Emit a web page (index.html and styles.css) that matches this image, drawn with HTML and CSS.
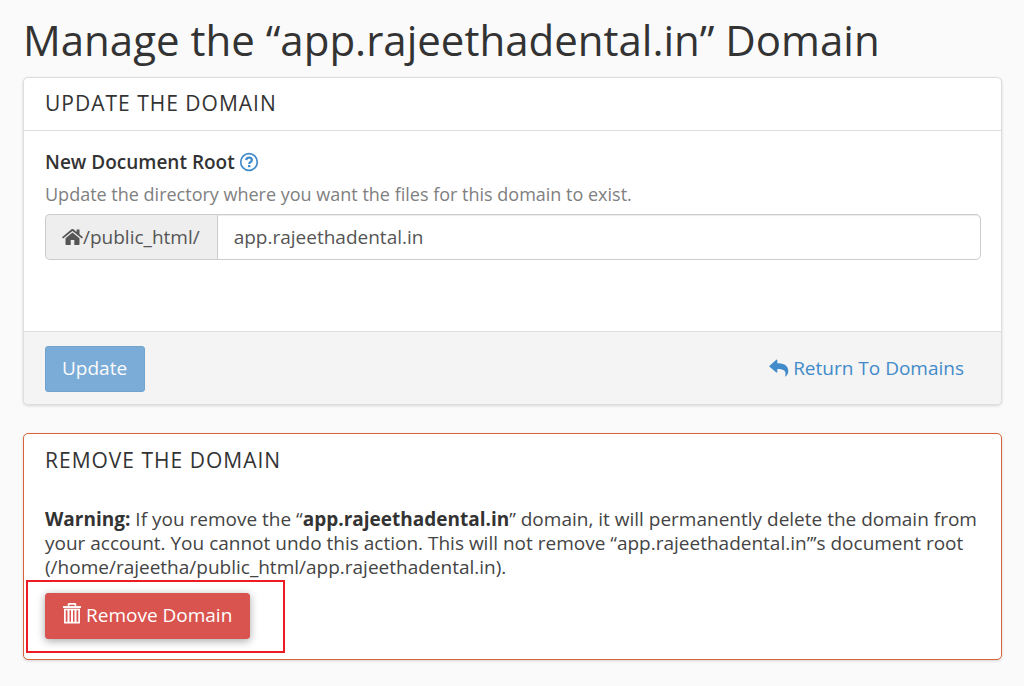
FILE: index.html
```html
<!DOCTYPE html>
<html lang="en">
<head>
  <meta charset="UTF-8">
  <meta name="viewport" content="width=device-width, initial-scale=1">
  <title>Manage the Domain</title>
  <link rel="stylesheet" href="styles.css">
</head>
<body>
  <main class="content">
    <h1 class="page-header">Manage the “app.rajeethadental.in” Domain</h1>

    <form class="panel">
      <h2 class="panel-heading">Update the Domain</h2>
      <div class="panel-body">
        <div class="label-row">
          <label for="doc-root">New Document Root</label>
          <button type="button" class="help-btn" aria-label="Help">
            <svg viewBox="0 0 20 20" width="20" height="20" fill="none" stroke="currentColor">
              <circle cx="10" cy="10" r="8.300" stroke-width="1.700"/>
              <path d="M7.200 8.100C7.300 6.400 8.500 5.600 10 5.600c1.700 0 2.900 1 2.900 2.400 0 2-2.700 2-2.700 4" stroke-width="2.200"/>
              <path d="M10.200 13v2.200" stroke-width="2.400"/>
            </svg>
          </button>
        </div>
        <p class="help-text">Update the directory where you want the files for this domain to exist.</p>
        <div class="input-group">
          <span class="input-addon">
            <svg viewBox="0 0 21 18" width="21" height="18" fill="currentColor">
              <path d="M10.500 4.400 3.500 10.200V16.200q0 .8.800.8H8.700V12h3.600v5h4.400q.8 0 .8-.8V10.200z"/>
              <path d="M0 9.200 9.500 1.300q1-.8 2 0L14.600 3.900V1.400h2.900v4.900L21 9.200 19.900 10.500 10.500 2.900 1.100 10.500z"/>
            </svg>/public_html/
          </span>
          <input type="text" id="doc-root" class="form-control" value="app.rajeethadental.in">
        </div>
      </div>
      <div class="panel-footer">
        <button type="submit" class="btn btn-primary" disabled>Update</button>
        <a href="#" class="return-link">
          <svg viewBox="0 0 20 18" width="20" height="18" fill="currentColor">
            <path d="M.3 7 7.300.8Q8.300.2 8.300 1.400V4.200C15 4.200 19.300 6.500 19.300 12c0 2.200-1 4-2.400 5.300-.5.400-.9.200-.7-.4C17.500 12.500 15.500 10 8.300 10v2.900q0 1.100-1 .5L.3 7.600q-.3-.3 0-.6z"/>
          </svg>
          Return To Domains
        </a>
      </div>
    </form>

    <section class="panel panel-danger">
      <h2 class="panel-heading">Remove the Domain</h2>
      <div class="panel-body">
        <p class="warning"><strong>Warning:</strong> If you remove the “<strong>app.rajeethadental.in</strong>” domain, it will permanently delete the domain from your account. You cannot undo this action. This will not remove “app.rajeethadental.in”’s document root (/home/rajeetha/public_html/app.rajeethadental.in).</p>
        <div class="highlight">
          <button type="button" class="btn btn-danger">
            <svg viewBox="0 0 18 25" width="18" height="25" fill="none" stroke="currentColor">
              <path d="M5.500 3.600V1.500Q5.500.9 6.100.9H11.900Q12.500.9 12.500 1.500V3.600" stroke-width="1.600"/>
              <path d="M0 4.100H18" stroke-width="2"/>
              <path d="M1.900 6.500H16.100V19.700H1.900z" stroke-width="1.700"/>
              <path d="M5.500 7v12M9 7v12M12.500 7v12" stroke-width="2"/>
            </svg>
            Remove Domain
          </button>
        </div>
      </div>
    </section>
  </main>
</body>
</html>
```
FILE: styles.css
```css
* {
  box-sizing: border-box;
}
body {
  margin: 0;
  background-color: #fafafa;
  color: #333;
  font-family: "Open Sans", Arial, sans-serif;
  font-size: 18px;
  line-height: 24px;
}
h1, h2, p {
  margin: 0;
}
svg {
  flex: none;
}
.content {
  padding: 15px 22px 24px 23px;
}
.page-header {
  margin-bottom: 12px;
  font-size: 42px;
  font-weight: 400;
  line-height: 50px;
}
.panel {
  margin-bottom: 28px;
  background-color: #fff;
  border: 1px solid #ddd;
  border-radius: 5px;
  box-shadow: 0 1px 3px rgba(0, 0, 0, 0.15);
}
.panel-heading {
  padding: 13px 21px 15px;
  border-bottom: 1px solid #ddd;
  font-size: 21px;
  font-weight: 400;
  line-height: 24px;
  letter-spacing: 1px;
  text-transform: uppercase;
}
.panel-body {
  padding: 19px 20px 71px 21px;
}
.label-row {
  display: flex;
  align-items: center;
  gap: 4px;
  font-size: 19px;
  font-weight: 600;
}
.help-btn {
  display: flex;
  padding: 0;
  border: none;
  background: none;
  color: #428bca;
  cursor: pointer;
}
.help-text {
  margin: 8px 0;
  color: #808080;
}
.input-group {
  display: flex;
  font-size: 19px;
}
.input-addon {
  display: flex;
  align-items: center;
  padding: 0 17px 0 16px;
  background-color: #eee;
  border: 1px solid #ccc;
  border-right: none;
  border-radius: 5px 0 0 5px;
  color: #555;
}
.form-control {
  flex: 1;
  min-width: 0;
  height: 46px;
  padding: 0 16px;
  border: 1px solid #ccc;
  border-radius: 0 5px 5px 0;
  background-color: #fff;
  box-shadow: inset 0 1px 1px rgba(0, 0, 0, 0.08);
  color: #555;
  font: inherit;
}
.panel-footer {
  display: flex;
  justify-content: space-between;
  align-items: center;
  padding: 14px 37px 12px 21px;
  border-top: 1px solid #ddd;
  border-radius: 0 0 5px 5px;
  background-color: #f4f4f4;
}
.btn {
  display: flex;
  align-items: center;
  gap: 5px;
  height: 46px;
  padding: 0 17px 2px 16px;
  border: 1px solid;
  border-radius: 3px;
  color: #fff;
  font: inherit;
  font-size: 19px;
  cursor: pointer;
}
.btn-primary {
  background-color: #428bca;
  border-color: #357ebd;
}
.btn-primary:disabled {
  opacity: 0.68;
  cursor: not-allowed;
}
.return-link {
  display: flex;
  align-items: center;
  gap: 4px;
  padding-bottom: 2px;
  color: #428bca;
  font-size: 19px;
  text-decoration: none;
}
.panel-danger {
  margin-bottom: 0;
  border-color: #d9643a;
}
.panel-danger .panel-heading {
  padding-top: 14px;
  border-bottom: none;
}
.panel-danger .panel-body {
  padding: 20px 20px 6px 2px;
}
.warning {
  margin-bottom: 1px;
  padding-left: 19px;
  color: #444;
  font-size: 19px;
}
.warning strong {
  color: #333;
}
.highlight {
  width: fit-content;
  padding: 11px 33px 12px 17px;
  border: 2px solid #ed1c24;
}
.btn-danger {
  padding-right: 17px;
  padding-left: 17px;
  background-color: #d9534f;
  border-color: #d9534f;
  box-shadow: 0 2px 8px rgba(0, 0, 0, 0.35);
}
```
